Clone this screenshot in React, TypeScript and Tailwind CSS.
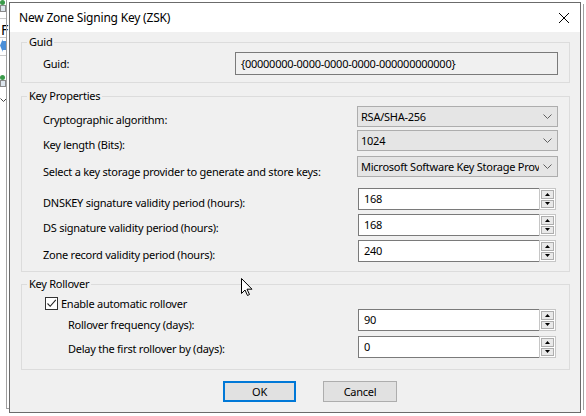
import React from 'react';

const font = "font-['Noto_Sans',sans-serif] text-[11px] leading-[16px] tracking-[-0.25px] text-black";

function Chevron() {
  return (
    <svg width="9" height="5" viewBox="0 0 9 5" className="shrink-0">
      <path d="M0.5 0.5 L4.5 4.5 L8.5 0.5" fill="none" stroke="#606060" strokeWidth="1" />
    </svg>
  );
}

function Combo({ value }: { value: string }) {
  return (
    <div className="flex h-[21px] w-[201px] items-center border border-[#adadad] bg-[#e5e5e5] pl-[3px] pr-[5px]">
      <span className="min-w-0 flex-1 overflow-hidden whitespace-nowrap">{value}</span>
      <div className="ml-[4px]">
        <Chevron />
      </div>
    </div>
  );
}

function Arrow({ up }: { up?: boolean }) {
  return (
    <svg width="5" height="3" viewBox="0 0 5 3">
      <polygon points={up ? '0,3 2.5,0 5,3' : '0,0 2.5,3 5,0'} fill="#000" />
    </svg>
  );
}

function Spin({ value }: { value: string }) {
  return (
    <div className="flex h-[22px] w-[198px]">
      <div className="flex flex-1 items-center border border-r-0 border-[#7a7a7a] bg-white pl-[5px]">
        {value}
      </div>
      <div className="flex w-[17px] flex-col gap-[1px] border border-[#c6c6c6] bg-white p-[1px]">
        <div className="flex flex-1 items-center justify-center border border-[#adadad] bg-[#e9e9e9]">
          <Arrow up />
        </div>
        <div className="flex flex-1 items-center justify-center border border-[#adadad] bg-[#e9e9e9]">
          <Arrow />
        </div>
      </div>
    </div>
  );
}

function Row({ label, labelTop, mt, h, children }: any) {
  return (
    <div className={`flex items-start pl-[21px] ${mt} ${h}`}>
      <div className={`w-[314px] whitespace-nowrap ${labelTop}`}>{label}</div>
      {children}
    </div>
  );
}

function NetIcon({ top }: { top: string }) {
  return (
    <div className={`absolute left-0 ${top} flex flex-col`}>
      <div className="h-[5px] w-[5px] rounded-full bg-[#3a9a4a]" />
      <div className="h-[7px] w-[6px] border border-[#8a8a8a] bg-[#dde6ee]" />
    </div>
  );
}

export default function App() {
  return (
    <div className={`relative flex h-[416px] w-[586px] overflow-hidden bg-white ${font}`}>
      {/* MMC window behind */}
      <div className="relative h-full w-[9px]">
        <NetIcon top="top-0" />
        <div className="absolute left-0 top-[18px] h-[1px] w-[7px] bg-[#c8c8c8]" />
        <div className="absolute left-[1px] top-[22px] text-[14px] leading-[16px]">F</div>
        <div className="absolute left-0 top-[37px] h-[1px] w-[7px] bg-[#c8c8c8]" />
        <div className="absolute left-0 top-[39px] h-[13px] w-[6px] bg-[#4a8fd8] [clip-path:polygon(100%_15%,45%_15%,45%_0,0_50%,45%_100%,45%_85%,100%_85%)]" />
        <div className="absolute left-0 top-[55px] h-[1px] w-[7px] bg-[#c8c8c8]" />
        <NetIcon top="top-[75px]" />
        <svg className="absolute left-0 top-[98px]" width="7" height="5" viewBox="0 0 7 5">
          <path d="M0.5 0.5 L3.5 3.5 L6.5 0.5" fill="none" stroke="#444" strokeWidth="1" />
        </svg>
        <div className="absolute left-[6px] top-0 h-[408px] w-[1px] bg-[#a0a0a0]" />
        <div className="absolute left-[6px] top-[408px] h-[1px] w-[3px] bg-[#a0a0a0]" />
      </div>

      {/* dialog */}
      <div className="mt-[2px] flex h-[411px] w-[572px] flex-col border border-[#6b6b6b] bg-white">
        <div className="flex h-[29px] items-center justify-between pl-[9px] pr-[11px]">
          <span className="text-[12px] tracking-[-0.2px]">New Zone Signing Key (ZSK)</span>
          <svg width="10" height="10" viewBox="0 0 10 10">
            <path d="M0 0 L10 10 M10 0 L0 10" stroke="#000" strokeWidth="1" />
          </svg>
        </div>

        <div className="flex flex-1 flex-col bg-[#f0f0f0] pl-[11px]">
          <fieldset className="mt-[2px] w-[549px] border border-[#dcdcdc] pb-[7px]">
            <legend className="ml-[5px] px-[2px]">Guid</legend>
            <div className="mt-[2px] flex h-[23px] items-center pl-[21px]">
              <div className="w-[192px]">Guid:</div>
              <div className="flex h-[23px] w-[323px] items-center border border-[#7a7a7a] bg-[#f0f0f0] pl-[5px]">
                {'{00000000-0000-0000-0000-000000000000}'}
              </div>
            </div>
          </fieldset>

          <fieldset className="mt-[5px] w-[549px] border border-[#dcdcdc] pb-[9px]">
            <legend className="ml-[5px] px-[2px]">Key Properties</legend>
            <Row label="Cryptographic algorithm:" labelTop="mt-[6px]" mt="mt-[2px]" h="h-[21px]">
              <Combo value="RSA/SHA-256" />
            </Row>
            <Row label="Key length (Bits):" labelTop="mt-[7px]" mt="mt-[3px]" h="h-[21px]">
              <Combo value="1024" />
            </Row>
            <Row label="Select a key storage provider to generate and store keys:" labelTop="mt-[8px]" mt="mt-[5px]" h="h-[21px]">
              <Combo value="Microsoft Software Key Storage Provider" />
            </Row>
            <Row label="DNSKEY signature validity period (hours):" labelTop="mt-[7px]" mt="mt-[11px]" h="h-[22px]">
              <div className="ml-[1px]">
                <Spin value="168" />
              </div>
            </Row>
            <Row label="DS signature validity period (hours):" labelTop="mt-[6px]" mt="mt-[4px]" h="h-[22px]">
              <div className="ml-[1px]">
                <Spin value="168" />
              </div>
            </Row>
            <Row label="Zone record validity period (hours):" labelTop="mt-[7px]" mt="mt-[4px]" h="h-[22px]">
              <div className="ml-[1px]">
                <Spin value="240" />
              </div>
            </Row>
          </fieldset>

          <fieldset className="mt-[4px] w-[549px] border border-[#dcdcdc] pb-[11px]">
            <legend className="ml-[5px] px-[2px]">Key Rollover</legend>
            <div className="mt-[5px] flex h-[13px] items-center pl-[23px]">
              <div className="flex h-[13px] w-[13px] items-center justify-center border border-[#333] bg-white">
                <svg width="11" height="11" viewBox="0 0 11 11">
                  <polyline points="1.5,5.5 4.2,8.3 9.8,1.8" fill="none" stroke="#222" strokeWidth="1.1" />
                </svg>
              </div>
              <span className="ml-[3px]">Enable automatic rollover</span>
            </div>
            <div className="-mt-[1px] flex h-[22px] items-start pl-[46px]">
              <div className="mt-[8px] w-[290px]">Rollover frequency (days):</div>
              <Spin value="90" />
            </div>
            <div className="mt-[5px] flex h-[22px] items-start pl-[46px]">
              <div className="mt-[5px] w-[290px]">Delay the first rollover by (days):</div>
              <Spin value="0" />
            </div>
          </fieldset>

          <div className="mt-[11px] flex">
            <div className="ml-[202px] flex h-[21px] w-[73px] items-center justify-center border-2 border-[#0078d7] bg-[#e1e1e1]">
              OK
            </div>
            <div className="ml-[27px] flex h-[21px] w-[74px] items-center justify-center border border-[#adadad] bg-[#e1e1e1]">
              Cancel
            </div>
          </div>
        </div>
      </div>

      {/* right edge of window behind */}
      <div className="relative h-full flex-1">
        <div className="absolute left-[2px] top-[4px] h-[406px] w-[1px] bg-[#a0a0a0]" />
      </div>

      {/* mouse cursor */}
      <svg className="absolute left-[241px] top-[278px]" width="13" height="19" viewBox="0 0 13 19">
        <path d="M0.5 0.5 V15.5 L4 12 L6.5 17.5 L8.5 16.5 L6 11.2 H11 Z" fill="#fff" stroke="#000" strokeWidth="1" />
      </svg>
    </div>
  );
}
